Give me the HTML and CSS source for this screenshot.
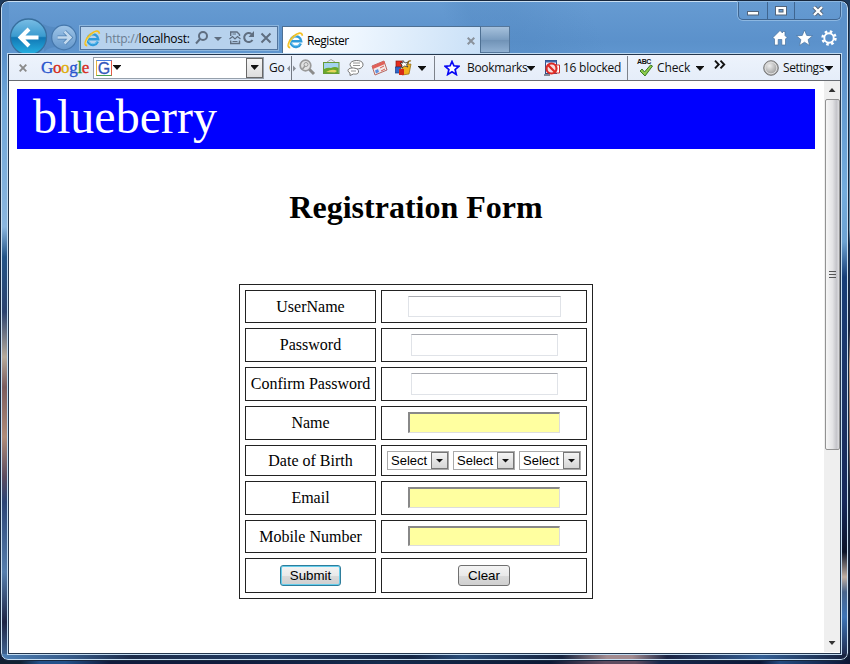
FILE: index.html
```html
<!DOCTYPE html>
<html lang="en">
<head>
<meta charset="utf-8">
<title>Register</title>
<link rel="stylesheet" href="styles.css">
</head>
<body>
<svg class="defs" width="0" height="0">
  <defs>
    <linearGradient id="blueBtn" x1="0" y1="0" x2="0" y2="1"><stop offset="0" stop-color="#79bde5"/><stop offset=".48" stop-color="#3b9bcf"/><stop offset=".52" stop-color="#1177b4"/><stop offset="1" stop-color="#28b4e4"/></linearGradient>
    <linearGradient id="paleBtn" x1="0" y1="0" x2="0" y2="1"><stop offset="0" stop-color="#9fc5e8"/><stop offset="1" stop-color="#6497cb"/></linearGradient>
    <radialGradient id="ball" cx=".4" cy=".35"><stop offset="0" stop-color="#eee"/><stop offset="1" stop-color="#aaa"/></radialGradient>
    <symbol id="ie" viewBox="0 0 18 18">
      <path d="M14.6 12.2A5.6 5.6 0 1 1 15 9.8H5" fill="none" stroke="#2f9bdb" stroke-width="2.7"/>
      <path d="M14 12A5.4 5.4 0 0 1 4.3 11" fill="none" stroke="#7accf5" stroke-width="1"/>
      <path d="M3.4 16.4C-.6 16.8 1.5 9.6 6.4 5S16.2-.3 16.2 4" fill="none" stroke="#f2bf22" stroke-width="1.9"/>
      <path d="M2 14.5C2.5 10 8 4 13 2.3" fill="none" stroke="#ffe882" stroke-width=".8"/>
    </symbol>
  </defs>
</svg>
<div class="window">
  <header class="chrome">
    <div class="nav-buttons">
      <svg width="70" height="39" viewBox="0 0 70 39">
        <path d="M34 9Q43 13 48 12L48 32Q40 32 35 37Z" fill="#4678b0" opacity=".35"/>
        <circle cx="19.500" cy="22" r="18" fill="url(#blueBtn)" stroke="#386f9e" stroke-width="1.3"/>
        <path d="M11 22.500H29.500M20 14L11.500 22.500L20 31" fill="none" stroke="#fff" stroke-width="4"/>
        <circle cx="55" cy="22.500" r="12.300" fill="url(#paleBtn)" stroke="#4577ab" stroke-width="1.2"/>
        <path d="M48.500 22.500H61M55.500 16.500L61.500 22.500L55.500 28.500" fill="none" stroke="#4f80b3" stroke-width="4"/>
        <path d="M48.500 22.500H61M55.500 16.500L61.500 22.500L55.500 28.500" fill="none" stroke="#c2d9ee" stroke-width="2.500"/>
      </svg>
    </div>
    <div class="address">
      <svg class="ie" width="17" height="17"><use href="#ie"/></svg>
      <span class="url"><span class="scheme">http://</span>localhost:</span>
      <svg class="address-icons" width="80" height="22" viewBox="0 0 80 22" fill="none" stroke="#5f6e80" stroke-width="2">
        <circle cx="9" cy="9" r="4"/><path d="M6 12L2 16.500"/>
        <path d="M20 10H28L24 14Z" fill="#5f6e80" stroke="none"/>
        <path d="M36.700 9V5H43L45.500 7.500V9M36.700 13.500V16.500H45.500V13.500" stroke-width="1.400"/><path d="M35.500 12L38.500 9.500L41 12L43.500 9.500L46.500 12M38.500 14.500H43.500M38.500 7H42" stroke-width="1.200"/>
        <path d="M57.500 7A4.500 4.500 0 1 0 58.500 13"/><path d="M60 4V10H54.500Z" fill="#5f6e80" stroke="none"/>
        <path d="M67.500 6.500L76.500 15.500M76.500 6.500L67.500 15.500"/>
      </svg>
    </div>
    <div class="tab">
      <svg width="17" height="17"><use href="#ie"/></svg>
      <span>Register</span>
      <svg class="tab-close" width="8" height="8" viewBox="0 0 8 8"><path d="M.7.7L7.3 7.3M7.3.7L.7 7.3" stroke="#8a929c" stroke-width="2"/></svg>
    </div>
    <div class="new-tab"></div>
    <div class="right-controls">
      <div class="caption-buttons">
        <div><svg width="12" height="10"><rect x=".5" y="5.500" width="11" height="3.500" fill="#fff" stroke="#53647a"/></svg></div>
        <div><svg width="12" height="10"><rect x=".5" y=".5" width="11" height="8.500" fill="#fff" stroke="#53647a"/><rect x="4" y="3.500" width="4" height="2.500" fill="#6ba0d4" stroke="#53647a"/></svg></div>
        <div><svg width="12" height="10" viewBox="0 0 12 10"><path d="M2 1L10 9M10 1L2 9" stroke="#53647a" stroke-width="4.200"/><path d="M2 1L10 9M10 1L2 9" stroke="#fff" stroke-width="2.400"/></svg></div>
      </div>
      <svg class="tools" width="66" height="18" viewBox="0 0 66 18" fill="#fff" stroke="#48719c" stroke-width=".7">
        <path d="M1 8.500L8 1.500L10.500 4V2.500H13V6.500L15 8.500L13.500 10V16H9.800V10.500H6.200V16H2.500V10Z"/>
        <path d="M32.500 1L34.700 6.400L40.500 6.900L36.100 10.600L37.500 16.400L32.500 13.200L27.500 16.400L28.900 10.600L24.500 6.900L30.300 6.400Z"/>
        <g fill="none" stroke="#fff"><circle cx="57" cy="9" r="6.400" stroke-width="2.600" stroke-dasharray="2.513 2.513"/><circle cx="57" cy="9" r="4.700" stroke-width="1.900"/></g>
      </svg>
    </div>
  </header>

  <div class="client">
    <div class="toolbar">
      <svg class="tb-close" width="8" height="8" viewBox="0 0 8 8"><path d="M.7.7L7.3 7.3M7.3.7L.7 7.3" stroke="#8a8a8a" stroke-width="1.900"/></svg>
      <span class="google"><b class="c1">G</b><b class="c2">o</b><b class="c3">o</b><b class="c1">g</b><b class="c4">l</b><b class="c2">e</b></span>
      <div class="search">
        <span class="g-icon">G</span><i class="caret"></i>
        <span class="drop"><i class="caret"></i></span>
      </div>
      <span class="go">Go</span>
      <svg class="splitter" width="9" height="24"><path d="M4.500 0V24" stroke="#737983"/><path d="M3 9.500L0 12.500L3 15.500ZM6 9.500L9 12.500L6 15.500Z" fill="#8a8f98"/></svg>
      <svg class="icons" width="114" height="18" viewBox="0 0 114 18">
        <g fill="none" stroke="#9a9a9a"><circle cx="6.500" cy="6.500" r="5.300" fill="#e2e2e2" stroke-width="1.700"/><path d="M10.500 10.500L15 15" stroke="#8b8b8b" stroke-width="3"/><circle cx="7" cy="5.500" r="2"/><path d="M6 7L3.500 10" stroke-width="1.500"/></g>
        <g><path d="M28 3L32 .5L36 3" fill="none" stroke="#aaa"/><rect x="24.500" y="3.500" width="15.500" height="11" fill="#a4d3ef" stroke="#679b36"/><path d="M25 10Q29 8 32 9Q36 7 39.500 9V14H25Z" fill="#69a82b"/><path d="M27 13Q34 9 38 12L36 13.500Z" fill="#e4d45b"/></g>
        <g fill="#fff" stroke="#777"><path d="M51 5.500C51 .5 63.500 0 64 5S58 10.500 56 9.500L52 11L53 8.500Q51 7.500 51 5.500Z"/><path d="M49 11.500C49 8 59 8 59.500 12S55 15 54.500 15L51 16.500V14Q49 13 49 11.500Z"/><path d="M54 4H61M54 6.500H61M52 12H57" stroke-width=".8"/></g>
        <g><path d="M73 7L85 2L88 11L76 16Z" fill="#f1eaea" stroke="#b66a65"/><path d="M73 7L85 2L86 5L74 10Z" fill="#e0605a"/><path d="M76 11.500L79 10L80 13L77 14.500Z" fill="#5b8fdf"/><path d="M81 9L85 7M82 12L86 10" stroke="#d75b54"/></g>
        <g stroke-width=".7"><rect x="97" y="2" width="6" height="6" fill="#e52b1e" stroke="#8b1712"/><path d="M103 6L112 5L110 15L103 16Z" fill="#f2b21d" stroke="#8c6510"/><rect x="96.500" y="8" width="5" height="6" fill="#2f65c9" stroke="#173c8a"/><path d="M100 10H105V16H100Z" fill="#d52b18"/><path d="M104 1.500L106 4L109 3L107.500 6L109 8L105.500 7L103 9V6L101 4H104Z" fill="#fff" stroke="#222"/><path d="M109 5Q109 1 112 2" fill="none" stroke="#8c6510" stroke-width="1.300"/></g>
      </svg>
      <i class="caret more"></i>
      <i class="divider d1"></i>
      <svg class="star" width="16" height="16" viewBox="0 0 16 16"><path d="M8 1.500L9.900 5.800L14.800 6.300L11.100 9.500L12.300 14.500L8 11.800L3.700 14.500L4.900 9.500L1.200 6.300L6.100 5.800Z" fill="#fff" stroke="#0808f5" stroke-width="1.700"/></svg>
      <span class="bookmarks">Bookmarks</span><i class="caret"></i>
      <svg class="blocked-icon" width="16" height="16" viewBox="0 0 16 16"><rect x="1.500" y=".5" width="11" height="13" fill="#eef" stroke="#334f84"/><rect x="1.500" y=".5" width="11" height="2" fill="#4068aa"/><path d="M11 5H15.500V13H11Z" fill="#fff" stroke="#c33"/><circle cx="7.500" cy="8.500" r="5" fill="#f5dede" stroke="#dd2a25" stroke-width="2.200"/><path d="M4 5L11 12" stroke="#dd2a25" stroke-width="2.200"/><path d="M0 15H6" stroke="#223"/></svg>
      <span class="blocked">16 blocked</span>
      <i class="divider d2"></i>
      <div class="abc"><span>ABC</span><svg width="14" height="13" viewBox="0 0 14 13"><path d="M1 7L3 5L5.500 8L11.500 1L13.500 2L6 12Z" fill="#8ccc4b" stroke="#3c7b27"/></svg></div>
      <span class="check">Check</span><i class="caret check-caret"></i>
      <svg class="chevrons" width="12" height="9" viewBox="0 0 12 9"><path d="M1 .7L4.700 4.500L1 8.300M6.500 .7L10.200 4.500L6.500 8.300" fill="none" stroke="#111" stroke-width="1.900"/></svg>
      <svg class="ball" width="16" height="16"><circle cx="8" cy="8" r="7.300" fill="url(#ball)" stroke="#777"/><circle cx="8" cy="8" r="5.800" fill="none" stroke="#ddd"/></svg>
      <span class="settings">Settings</span><i class="caret"></i>
    </div>
    <div class="viewport">
      <main>
        <div class="banner">blueberry</div>
        <h1>Registration Form</h1>
        <table>
          <tr class="h33"><td class="label">UserName</td><td class="field"><input class="plain"></td></tr>
          <tr class="h34"><td>Password</td><td><input class="plain secret" type="password"></td></tr>
          <tr class="h34"><td>Confirm Password</td><td><input class="plain secret" type="password"></td></tr>
          <tr class="h34"><td>Name</td><td><input class="filled"></td></tr>
          <tr class="h31"><td>Date of Birth</td><td><div class="dates">
            <div class="select">Select<span><i class="caret"></i></span></div>
            <div class="select">Select<span><i class="caret"></i></span></div>
            <div class="select">Select<span><i class="caret"></i></span></div>
          </div></td></tr>
          <tr class="h34"><td>Email</td><td><input class="filled"></td></tr>
          <tr class="h33"><td>Mobile Number</td><td><input class="filled short"></td></tr>
          <tr class="h35"><td><button class="submit">Submit</button></td><td><button>Clear</button></td></tr>
        </table>
      </main>
      <div class="scrollbar">
        <i class="arrow up"></i>
        <div class="thumb"><i></i><i></i><i></i></div>
        <i class="arrow down"></i>
      </div>
    </div>
  </div>
</div>
</body>
</html>
```
FILE: styles.css
```css
* { box-sizing: border-box; }
html, body { margin: 0; height: 100%; overflow: hidden; }
body {
  padding: 1px 2px 4px 1px;
  background:
    linear-gradient(90deg, #123 0 20px, #24518a 40px 65px, #101b3c 110px 225px, #142b4d 380px, #0d1935 550px, #604c60 605px 635px, #18294c 660px, #0c1838 760px, #254b80 780px, #0c1534) 0 660px / 100% 4px no-repeat,
    linear-gradient(#1d3a5c 0, #46729e 80px, #6c93ad 230px, #183560 245px, #1a2443 330px, #c79c7e 365px, #8e655b 440px, #142039 490px, #101c36);
  font: 12px "Open Sans", "Noto Sans", sans-serif;
}
i { display: block; flex: none; }
svg { display: block; flex: none; }
.defs { position: absolute; }
.window {
  height: 659px;
  padding: 0 6px 6px;
  border: 1px solid #c8def2;
  outline: 1px solid #17273d;
  border-radius: 7px;
  background:
    linear-gradient(90deg, #4d7fb4, #365a88 70px, #1d2c4a 130px, #223c63 270px, #152645 410px, #294c77 460px, #17243f 560px, #a28b90 605px 630px, #1b2443 665px, #345f94 760px, #16223e) 0 652px / 100% 6px no-repeat,
    linear-gradient(#5b91ca 0 54px, #6fa7d9 100px, #8bb6df 225px, #235487 255px, #2b426e 310px, #b7ab9b 355px, #7c5c5e 385px, #b08c79 435px, #5c4c60 475px, #2b4475 500px, #567fae 570px, #1d2444 620px, #456d9c) 0 0 / 7px 100% no-repeat,
    linear-gradient(#5b91ca 0 54px, #73acdd 190px, #6da2d2 240px, #173e78 275px, #1c3364 400px, #17285a 500px, #0b1429 550px, #c1b0a4 575px, #49658c 590px, #3e75b7 615px, #1b2443) 100% 0 / 7px 100% no-repeat,
    linear-gradient(65deg, transparent 53%, #4c82bb44 56% 61%, transparent 70%) 0 0 / 100% 54px no-repeat,
    linear-gradient(#669bd2, #5b91cb 40px, #6097d0 54px);
}
.chrome { height: 52px; display: flex; align-items: flex-start; margin-left: 1px; }
.nav-buttons { width: 71px; padding-top: 13px; height: 52px; overflow: hidden; }
.address {
  width: 198px; height: 24px; margin-top: 24px; padding-left: 3px;
  display: flex; align-items: center;
  border: 1px solid #52759e; outline: 1px solid #8bb5dd; outline-offset: 0;
  background: #b7d2ed;
}
.url { margin-left: 4px; width: 87px; white-space: nowrap; overflow: hidden; letter-spacing: -.23px; }
.scheme { color: #6b7d91; }
.address-icons { margin-left: 2px; }
.tab {
  width: 199px; height: 28px; margin: 24px 0 0 4px; padding: 0 5px 0 4px;
  display: flex; align-items: center;
  border: 1px solid #4e7093; border-bottom: 0;
  background: linear-gradient(100deg, #fff, #ecf5fe 40%, #c9e0f7);
}
.tab span { margin-left: 3px; letter-spacing: -.45px; }
.tab-close { margin-left: auto; }
.new-tab {
  width: 29px; height: 27px; margin-top: 24px;
  border: 1px solid #55779b; border-left: 0;
  background: linear-gradient(#a6c1dc, #7b9dc0 50%, #6f91b5 51%, #91b1d2);
}
.right-controls { margin-left: auto; width: 103px; }
.caption-buttons {
  width: 103px; height: 18px; display: grid; grid-template-columns: 28px 27px 1fr;
  border: 1px solid #3f6590; border-top: 0; border-radius: 0 0 5px 5px;
  box-shadow: 0 0 0 1px #8cb7e1;
}
.caption-buttons div { display: grid; place-items: center; }
.caption-buttons div + div { border-left: 1px solid #3f6590; }
.tools { margin: 9px 0 0 34px; }
.client { height: 600px; border: 1px solid #24364d; outline: 1px solid #c2dcf2; background: #fff; }
.toolbar {
  height: 26px; display: flex; align-items: center;
  border-bottom: 1px solid #696c72;
  background: linear-gradient(#edf3fc, #e5edf9);
  white-space: nowrap; color: #111;
}
.caret { width: 8px; height: 4px; background: #111; clip-path: polygon(0 0, 100% 0, 50% 100%); }
.toolbar .caret { height: 5px; clip-path: polygon(0 0, 100% 0, 100% 10%, 50% 100%, 0 10%); }
.toolbar > .caret { margin-top: 2px; }
.tb-close { margin-left: 10px; }
.google { width: 52px; margin-left: 14px; font: 17px/24px "Liberation Serif", serif; letter-spacing: -.35px; }
.google b { font-weight: 400; -webkit-text-stroke: .35px; }
.c1 { color: #2854cc; } .c2 { color: #d42b20; } .c3 { color: #dfac0b; } .c4 { color: #259238; }
.search {
  width: 171px; height: 22px; padding-left: 2px; display: flex; align-items: center;
  border: 1px solid #96a0ac; background: #fff;
}
.g-icon {
  width: 16px; height: 16px; margin-right: 1px; border: 1px solid; border-color: #477de0 #e45c47 #49a352 #e8b33b;
  font: 16px/15px "Liberation Sans", sans-serif; color: #3157ba; text-align: center; -webkit-text-stroke: .3px;
}
.drop {
  width: 17px; height: 20px; margin-left: auto; display: grid; place-items: center;
  border: 1px solid #686868; background: linear-gradient(#f5f5f5, #ddd);
}
.go { width: 19px; margin-left: 5px; letter-spacing: -.3px; }
.splitter { margin-left: -1px; }
.icons { margin-left: 3px; }
.more { margin-left: 5px; }
.divider { width: 1px; height: 24px; background: #7d828b; }
.d1 { margin-left: 8px; }
.star { margin-left: 9px; }
.bookmarks { width: 60px; margin-left: 7px; letter-spacing: -.3px; }
.blocked-icon { margin-left: 9px; }
.blocked { width: 64px; margin-left: 3px; letter-spacing: -.25px; }
.abc { width: 18px; height: 20px; margin-left: 9px; font: bold 7px/7px "Liberation Sans", sans-serif; letter-spacing: -.4px; }
.abc span { display: block; }
.abc svg { margin-left: 2px; margin-top: -1px; }
.check { width: 39px; margin-left: 2px; letter-spacing: -.1px; }
.chevrons { margin: -7px 0 0 10px; }
.ball { margin-left: 37px; }
.settings { width: 42px; margin-left: 4px; letter-spacing: -.45px; }
.viewport { display: flex; height: 572px; }
main { flex: 1; padding: 8px 9px 0 8px; color: #000; font: 16px "Liberation Serif", serif; }
.banner { height: 60px; padding-left: 16px; background: #00f; color: #fff; font-size: 48px; line-height: 56px; }
h1 { margin: 40px 0 0; font-size: 32px; line-height: 37px; text-align: center; }
table { width: 354px; margin: 58px auto 0; border: 1px solid #222; border-spacing: 5px; table-layout: fixed; }
td { padding: 0; border: 1px solid #222; text-align: center; vertical-align: middle; line-height: 18px; }
.label { width: 131px; } .field { width: 206px; }
.h31 { height: 31px; } .h33 { height: 33px; } .h34 { height: 34px; } .h35 { height: 35px; }
input { display: block; margin: 0 auto; padding: 0; outline: 0; }
.plain { width: 153px; height: 21px; border: 1px solid #e0e3e8; border-top-color: #a9abb1; background: #fff; }
.secret { width: 147px; height: 22px; }
.filled { width: 152px; height: 21px; margin-bottom: 2px; border: 1px solid #ddd; border-top: 2px solid #888; border-left: 2px solid #888; background: #ffffa0; }
.short { height: 20px; }
.dates { display: flex; justify-content: center; gap: 4px; }
.select {
  width: 62px; height: 19px; padding-left: 3px; display: flex; align-items: center;
  border: 1px solid #aaa; font: 13px "Liberation Sans", sans-serif;
}
.select span {
  width: 17px; height: 17px; margin-left: auto; display: grid; place-items: center;
  border: 1px solid #777; background: linear-gradient(#f4f4f4, #d6d6d6);
}
button {
  display: block; width: 52px; height: 21px; margin: 0 auto; padding: 0;
  border: 1px solid #707070; border-radius: 3px;
  background: linear-gradient(#f4f4f4, #e9e9e9 50%, #dadada 51%, #cfcfcf);
  font: 13.33px "Liberation Sans", sans-serif; color: #000;
}
.submit { width: 61px; border-color: #2f7d9b; box-shadow: inset 0 0 0 1px #64cdec; }
.scrollbar { width: 16px; height: 571px; display: flex; flex-direction: column; align-items: center; background: #efefef; }
.arrow { width: 7px; height: 4px; background: #333; }
.up { margin-top: 7px; clip-path: polygon(50% 0, 100% 100%, 0 100%); }
.down { margin: auto 0 7px; clip-path: polygon(0 0, 100% 0, 50% 100%); }
.thumb {
  width: 15px; height: 351px; margin-top: 7px; display: flex; flex-direction: column; align-items: center; justify-content: center; gap: 2px;
  border: 1px solid #929292; border-radius: 2px;
  background: linear-gradient(90deg, #f6f6f6, #e3e3e5 50%, #c5c5ca 80%, #dcdcdf);
}
.thumb i { width: 7px; height: 1px; background: #555; }
```
